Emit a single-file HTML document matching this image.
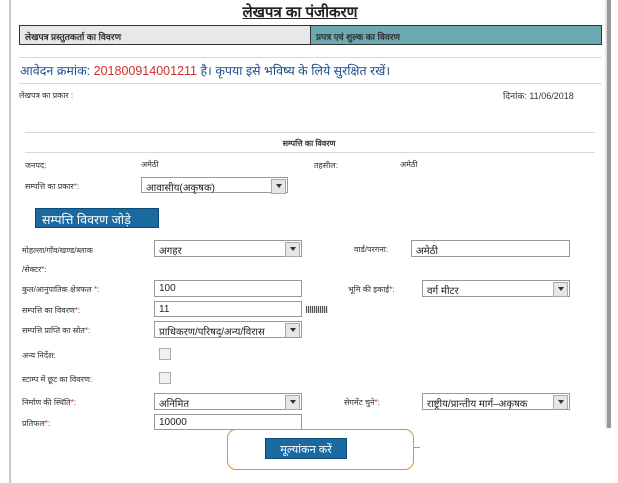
<!DOCTYPE html>
<html><head><meta charset="utf-8"><style>
*{margin:0;padding:0;box-sizing:border-box}
body{width:618px;height:483px;background:#fff;position:relative;overflow:hidden;font-family:"Liberation Sans","DejaVu Sans",sans-serif;color:#333;font-size:9px}
.a{position:absolute;white-space:nowrap}
.ln{position:absolute;height:1px;background:#d8d8d8}
.sel,.inp{position:absolute;border:1px solid #999;background:#fff;font-size:10px;padding:2px 0 0 4px;color:#222;height:17px}
.sel:after{content:"";position:absolute;right:1px;top:1px;width:13px;height:13px;background:#e6e6e6;border:1px solid #aaa}
.sel:before{content:"";position:absolute;right:5px;top:6px;border-left:3px solid transparent;border-right:3px solid transparent;border-top:4px solid #333;z-index:2}
.cb{position:absolute;width:12px;height:12px;border:1px solid #aaa;background:#f0f0f0}
.r{color:#d22}
</style></head><body>
<div class="a" style="left:0;top:0;width:11px;height:483px;border-right:2px solid #c8c8c8"></div>
<div class="a" style="left:607px;top:0;width:4px;height:428px;background:#999;box-shadow:-1px 0 2px #ccc"></div>
<div class="a" style="left:0;top:2px;width:600px;text-align:center;font-size:15px;font-weight:bold;text-decoration:underline;color:#222">लेखपत्र का पंजीकरण</div>
<div class="a" style="left:19px;top:25px;width:292px;height:20px;background:#e8e8e8;border:1px solid #333;font-size:9px;font-weight:bold;padding:4px 5px">लेखपत्र प्रस्तुतकर्ता का विवरण</div>
<div class="a" style="left:310px;top:25px;width:292px;height:20px;background:#6aaab0;border:1px solid #333;font-size:9px;font-weight:bold;padding:4px 5px">प्रपत्र एवं शुल्क का विवरण</div>
<div class="ln" style="left:19px;top:57px;width:583px"></div>
<div class="a" style="left:20px;top:62px;font-size:12.5px;color:#1f4e8c">आवेदन क्रमांक: <span style="color:#d0302c">201800914001211</span> है। कृपया इसे भविष्य के लिये सुरक्षित रखें।</div>
<div class="ln" style="left:19px;top:83px;width:583px"></div>
<div class="a" style="left:19px;top:90px;font-size:8px">लेखपत्र का प्रकार :</div>
<div class="a" style="left:503px;top:89px;font-size:9px">दिनांक: 11/06/2018</div>
<div class="ln" style="left:25px;top:132px;width:570px"></div>
<div class="a" style="left:0;top:138px;width:618px;text-align:center;font-size:8px;font-weight:bold">सम्पत्ति का विवरण</div>
<div class="ln" style="left:25px;top:152px;width:570px"></div>
<div class="a" style="left:25px;top:160px;font-size:8px">जनपद:</div>
<div class="a" style="left:141px;top:159px;font-size:8px">अमेठी</div>
<div class="a" style="left:314px;top:160px;font-size:8px">तहसील:</div>
<div class="a" style="left:400px;top:159px;font-size:8px">अमेठी</div>
<div class="a" style="left:25px;top:181px;font-size:8px">सम्पत्ति का प्रकार<span class="r">*</span>:</div>
<div class="sel" style="left:141px;top:177px;width:147px;height:16px">आवासीय(अकृषक)</div>
<div class="a" style="left:35px;top:208px;width:124px;height:20px;background:#1a6aa0;border:1px solid #0d4a78;color:#fff;font-size:12.5px;padding:2px 6px">सम्पत्ति विवरण जोड़े</div>
<div class="a" style="left:22px;top:245px;font-size:8px">मोहल्ला/गाँव/खण्ड/ब्लाक</div>
<div class="a" style="left:22px;top:264px;font-size:8px">/सेक्टर<span class="r">*</span>:</div>
<div class="sel" style="left:154px;top:240px;width:148px">अगहर</div>
<div class="a" style="left:354px;top:244px;font-size:8px">वार्ड/परगना:</div>
<div class="inp" style="left:411px;top:240px;width:159px">अमेठी</div>
<div class="a" style="left:22px;top:284px;font-size:8px">कुल/आनुपातिक क्षेत्रफल <span class="r">*</span>:</div>
<div class="inp" style="left:154px;top:280px;width:148px">100</div>
<div class="a" style="left:348px;top:284px;font-size:8px">भूमि की इकाई<span class="r">*</span>:</div>
<div class="sel" style="left:422px;top:280px;width:148px">वर्ग मीटर</div>
<div class="a" style="left:22px;top:305px;font-size:8px">सम्पत्ति का विवरण<span class="r">*</span>:</div>
<div class="inp" style="left:154px;top:301px;width:148px;height:16px">11</div>
<div class="a" style="left:306px;top:306px;width:22px;height:7px;background:repeating-linear-gradient(90deg,#555 0 1px,#ddd 1px 2px)"></div>
<div class="a" style="left:22px;top:325px;font-size:8px">सम्पत्ति प्राप्ति का स्रोत<span class="r">*</span>:</div>
<div class="sel" style="left:154px;top:321px;width:148px;overflow:hidden">प्राधिकरण/परिषद्/अन्य/विरास</div>
<div class="a" style="left:22px;top:350px;font-size:8px">अन्य निर्देश:</div>
<div class="cb" style="left:159px;top:348px"></div>
<div class="a" style="left:22px;top:374px;font-size:8px">स्टाम्प में छूट का विवरण:</div>
<div class="cb" style="left:159px;top:372px"></div>
<div class="a" style="left:22px;top:397px;font-size:8px">निर्माण की स्थिति<span class="r">*</span>:</div>
<div class="sel" style="left:154px;top:393px;width:148px">अनिमित</div>
<div class="a" style="left:344px;top:397px;font-size:8px">सेगमेंट चुने<span class="r">*</span>:</div>
<div class="sel" style="left:422px;top:393px;width:148px;overflow:hidden">राष्ट्रीय/प्रान्तीय मार्ग–अकृषक</div>
<div class="a" style="left:22px;top:418px;font-size:8px">प्रतिफल<span class="r">*</span>:</div>
<div class="inp" style="left:154px;top:414px;width:148px;height:16px">10000</div>
<div class="a" style="left:227px;top:429px;width:187px;height:41px;border:1px solid #e09040;border-radius:9px"></div>
<div class="a" style="left:414px;top:447px;width:6px;height:1px;background:#e09040"></div>
<div class="a" style="left:265px;top:438px;width:82px;height:21px;background:#1a6aa0;border:1px solid #0d4a78;color:#fff;font-size:11px;padding:3px 0;text-align:center">मूल्यांकन करें</div>
</body></html>
